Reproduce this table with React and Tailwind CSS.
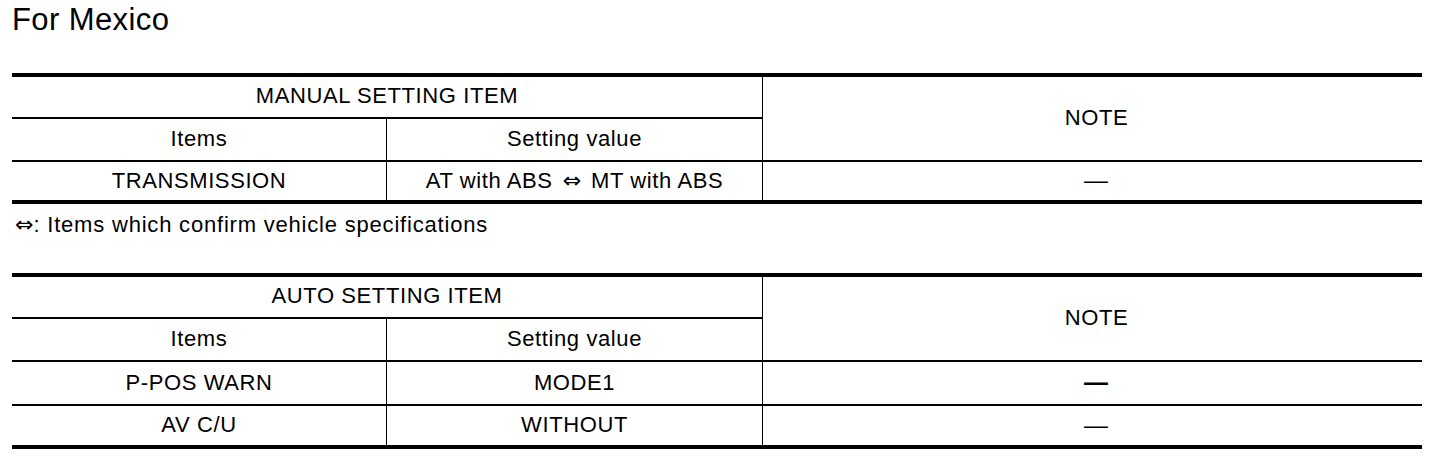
import React from 'react';

const font = { fontFamily: '"Liberation Sans", Arial, sans-serif' };

// the double arrow glyph is taken from DejaVu, Liberation draws it too small
const Arrow = () => <span className="font-['DejaVu_Sans'] tracking-normal">⇔</span>;

const SettingTable = ({ title, rows, heights }) => {
  return (
    <div className="w-[1410px] border-t-4 border-b-4 border-black grid grid-cols-[375px_376px_659px] text-[22px] tracking-[0.6px] text-black">
      {/* header */}
      <div className={`col-span-2 flex items-center justify-center pb-[3px] border-r border-b-2 border-black ${heights[0]}`}>
        {title}
      </div>
      <div className="row-span-2 flex items-center justify-center pb-[3px] pl-[8px] border-b-2 border-black">
        NOTE
      </div>
      <div className={`flex items-center justify-center pb-[2px] border-r border-b-2 border-black ${heights[1]}`}>
        Items
      </div>
      <div className={`flex items-center justify-center pb-[2px] border-r border-b-2 border-black ${heights[1]}`}>
        Setting value
      </div>

      {rows.map((row, i) => {
        const last = i === rows.length - 1;
        const h = heights[i + 2];
        return (
          <React.Fragment key={row.item}>
            <div className={`flex items-center justify-center pb-[2px] border-r border-black ${last ? '' : 'border-b-2'} ${h}`}>
              {row.item}
            </div>
            <div className={`flex items-center justify-center gap-[10px] pb-[2px] border-r border-black ${last ? '' : 'border-b-2'} ${h}`}>
              {row.value}
            </div>
            <div className={`flex items-center justify-center pl-[7px] pb-[2px] border-black ${last ? '' : 'border-b-2'} ${h}`}>
              <span className={`tracking-normal text-[24px] leading-none ${row.bold ? 'font-bold' : ''}`}>—</span>
            </div>
          </React.Fragment>
        );
      })}
    </div>
  );
};

const App = () => {
  return (
    <div className="w-[1456px] h-[460px] bg-white pl-[12px]" style={font}>
      <div className="h-[73px] pt-[2px]">
        <h1 className="text-[31px] leading-[36px] tracking-[0.4px] text-black">For Mexico</h1>
      </div>

      <SettingTable
        title="MANUAL SETTING ITEM"
        heights={['h-[42px]', 'h-[43px]', 'h-[38px]']}
        rows={[
          { item: 'TRANSMISSION', value: <>AT with ABS <Arrow /> MT with ABS</> },
        ]}
      />

      <div className="h-[69px] pt-[8px] pl-[3px] text-[22px] leading-[26px] tracking-[0.8px] text-black">
        <Arrow />: Items which confirm vehicle specifications
      </div>

      <SettingTable
        title="AUTO SETTING ITEM"
        heights={['h-[42px]', 'h-[43px]', 'h-[44px]', 'h-[39px]']}
        rows={[
          { item: 'P-POS WARN', value: 'MODE1', bold: true },
          { item: 'AV C/U', value: 'WITHOUT' },
        ]}
      />
    </div>
  );
};

export default App;
